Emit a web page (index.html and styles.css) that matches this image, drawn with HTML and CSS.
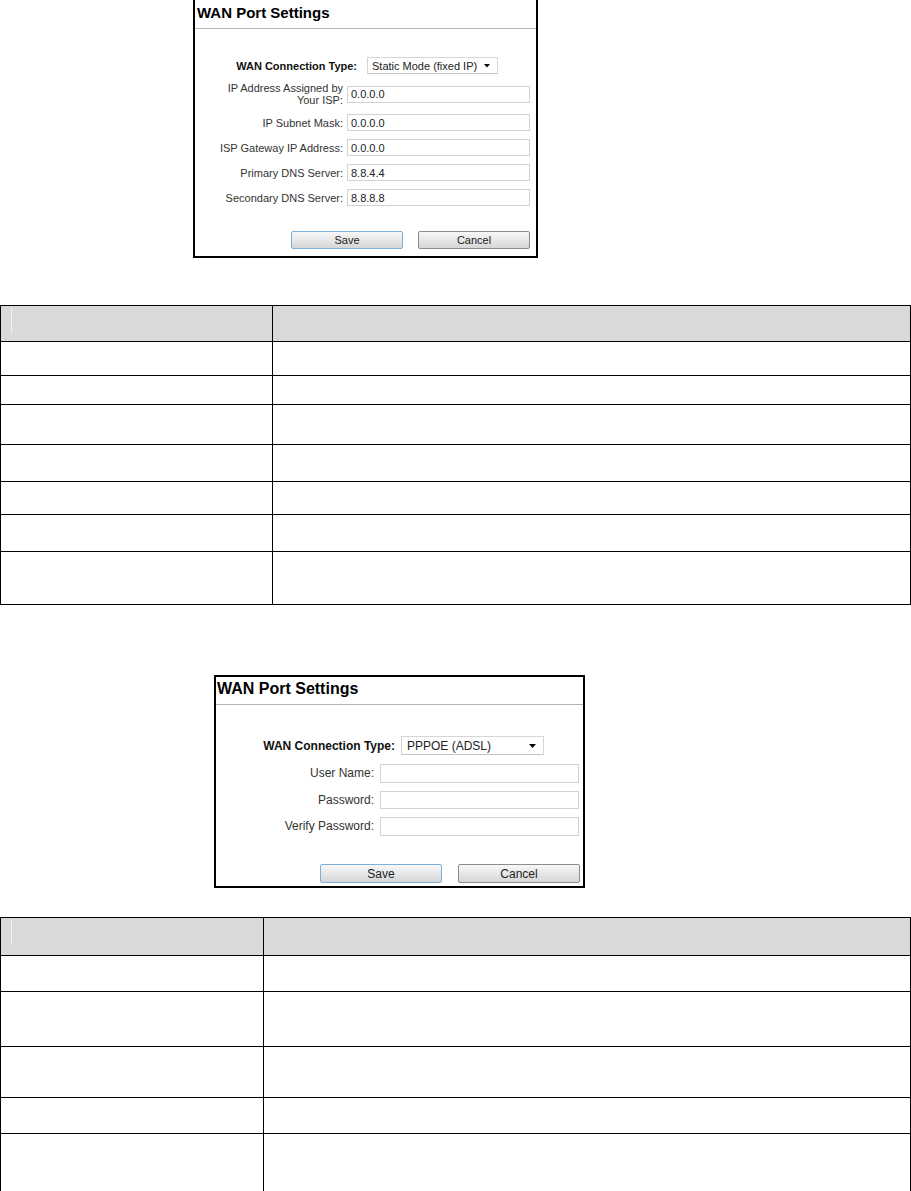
FILE: index.html
```html
<!DOCTYPE html>
<html lang="en">
<head>
    <meta charset="UTF-8">
    <meta name="viewport" content="width=device-width, initial-scale=1.0">
    <title>WAN Port Settings</title>
    <link rel="stylesheet" href="styles.css">
</head>
<body>

    <!-- Static IP -->
    <div class="dialog dialog-static">
        <div class="dlg-title">WAN Port Settings</div>
        <div class="dlg-form">
            <div class="row row-type">
                <label>WAN Connection Type:</label>
                <div class="select">
                    <span>Static Mode (fixed IP)</span>
                    <svg width="6" height="4" viewBox="0 0 6 4"><path d="M0 0H6L3 3.5Z" fill="#000"/></svg>
                </div>
            </div>
            <div class="row">
                <label>IP Address Assigned by<br>Your ISP:</label>
                <input type="text" value="0.0.0.0">
            </div>
            <div class="row">
                <label>IP Subnet Mask:</label>
                <input type="text" value="0.0.0.0">
            </div>
            <div class="row">
                <label>ISP Gateway IP Address:</label>
                <input type="text" value="0.0.0.0">
            </div>
            <div class="row">
                <label>Primary DNS Server:</label>
                <input type="text" value="8.8.4.4">
            </div>
            <div class="row">
                <label>Secondary DNS Server:</label>
                <input type="text" value="8.8.8.8">
            </div>
        </div>
        <div class="dlg-buttons">
            <button class="btn btn-save">Save</button>
            <button class="btn">Cancel</button>
        </div>
    </div>

    <table class="desc desc-static">
        <tr class="head h36"><td class="c1"><div class="hd-mark"></div></td><td></td></tr>
        <tr class="h34"><td></td><td></td></tr>
        <tr class="h29"><td></td><td></td></tr>
        <tr class="h40"><td></td><td></td></tr>
        <tr class="h37"><td></td><td></td></tr>
        <tr class="h33"><td></td><td></td></tr>
        <tr class="h37"><td></td><td></td></tr>
        <tr class="h53"><td></td><td></td></tr>
    </table>

    <!-- PPPoE -->
    <div class="dialog dialog-pppoe">
        <div class="dlg-title">WAN Port Settings</div>
        <div class="dlg-form">
            <div class="row row-type">
                <label>WAN Connection Type:</label>
                <div class="select">
                    <span>PPPOE (ADSL)</span>
                    <svg width="7" height="4" viewBox="0 0 7 4"><path d="M0 0H7L3.5 4Z" fill="#000"/></svg>
                </div>
            </div>
            <div class="row">
                <label>User Name:</label>
                <input type="text" value="">
            </div>
            <div class="row">
                <label>Password:</label>
                <input type="password" value="">
            </div>
            <div class="row">
                <label>Verify Password:</label>
                <input type="password" value="">
            </div>
        </div>
        <div class="dlg-buttons">
            <button class="btn btn-save">Save</button>
            <button class="btn">Cancel</button>
        </div>
    </div>

    <table class="desc desc-pppoe">
        <tr class="head h38"><td class="c1"><div class="hd-mark"></div></td><td></td></tr>
        <tr class="h36"><td></td><td></td></tr>
        <tr class="h55"><td></td><td></td></tr>
        <tr class="h51"><td></td><td></td></tr>
        <tr class="h36"><td></td><td></td></tr>
        <tr class="h60"><td></td><td></td></tr>
    </table>

</body>
</html>
```

FILE: styles.css
```css
body {
    margin: 0;
    background: #fff;
    font-family: "Liberation Sans", Arial, sans-serif;
    color: #000;
}

/* dialogs */
.dialog {
    box-sizing: border-box;
    border: 2px solid #000;
    background: #fff;
    color: #333;
}

.dlg-title {
    font-weight: bold;
    color: #000;
    border-bottom: 1px solid #b4b4b4;
}

.dlg-form {
    display: flex;
    flex-direction: column;
}

.row {
    display: flex;
    align-items: center;
}

.row label {
    text-align: right;
    flex-shrink: 0;
}

.row-type label {
    font-weight: bold;
    color: #111;
}

.row input {
    box-sizing: border-box;
    margin: 0;
    border: 1px solid #cfd3d8;
    padding: 0 3px;
    font-family: inherit;
    color: #222;
    background: #fff;
    outline: none;
}

.select {
    box-sizing: border-box;
    display: flex;
    align-items: center;
    justify-content: space-between;
    border: 1px solid #d6d6d6;
    border-bottom-color: #c4c4c4;
    background: #fff;
    color: #222;
}

.dlg-buttons {
    display: flex;
    justify-content: flex-end;
}

.btn {
    box-sizing: border-box;
    margin: 0;
    padding: 0;
    border: 1px solid #8c8c8c;
    border-radius: 2px;
    background: linear-gradient(#f7f7f7, #e4e4e4 60%, #d6d6d6);
    font-family: inherit;
    color: #222;
    cursor: pointer;
}

.btn-save {
    border-color: #7fb0dc;
}

/* static ip dialog */
.dialog-static {
    margin-left: 193px;
    width: 345px;
    height: 258px;
    border-top: none;
    font-size: 11px;
}

.dialog-static .dlg-title {
    font-size: 15px;
    line-height: 18px;
    padding: 4px 0 6px 2px;
}

.dialog-static .dlg-form {
    padding: 28px 6px 0 0;
    gap: 8px;
}

.dialog-static .row label {
    width: 148px;
    margin-right: 4px;
    line-height: 12px;
}

.dialog-static .row-type label {
    width: 162px;
    margin-right: 10px;
}

.dialog-static .row input {
    width: 183px;
    height: 17px;
    font-size: 11px;
}

.dialog-static .select {
    width: 131px;
    height: 17px;
    padding: 0 7px 0 4px;
}

.dialog-static .dlg-buttons {
    margin-top: 25px;
    padding-right: 6px;
    gap: 15px;
}

.dialog-static .btn {
    width: 112px;
    height: 18px;
    font-size: 11px;
}

/* pppoe dialog */
.dialog-pppoe {
    margin: 70px 0 0 214px;
    width: 371px;
    height: 213px;
    font-size: 12px;
}

.dialog-pppoe .dlg-title {
    font-size: 16px;
    line-height: 19px;
    padding: 2px 0 6px 1px;
}

.dialog-pppoe .dlg-form {
    padding: 31px 4px 0 0;
    gap: 8px;
}

.dialog-pppoe .row-type {
    margin-bottom: 1px;
}

.dialog-pppoe .row label {
    width: 158px;
    margin-right: 6px;
}

.dialog-pppoe .row-type label {
    width: 179px;
}

.dialog-pppoe .row input {
    width: 199px;
    height: 18.5px;
    font-size: 12px;
}

.dialog-pppoe .select {
    width: 143px;
    height: 19px;
    padding: 0 7px 0 5px;
    font-size: 12px;
}

.dialog-pppoe .dlg-buttons {
    margin-top: 28.5px;
    padding-right: 3px;
    gap: 16px;
}

.dialog-pppoe .btn {
    width: 122px;
    height: 19px;
    font-size: 12px;
}

/* description tables */
.desc {
    width: 911px;
    border-collapse: collapse;
    table-layout: fixed;
}

.desc td {
    border: 1px solid #000;
    padding: 0;
}

.desc .head td {
    background: #d9d9d9;
    vertical-align: top;
}

.hd-mark {
    margin: 2px 0 0 10px;
    height: 25px;
    border-left: 1px solid #f3f3f3;
}

.desc-static {
    margin-top: 47px;
}

.desc-static .c1 {
    width: 271px;
}

.desc-pppoe {
    margin-top: 29px;
}

.desc-pppoe .c1 {
    width: 262px;
}

.h29 { height: 29px; }
.h33 { height: 33px; }
.h34 { height: 34px; }
.h36 { height: 36px; }
.h37 { height: 37px; }
.h38 { height: 38px; }
.h40 { height: 40px; }
.h51 { height: 51px; }
.h53 { height: 53px; }
.h55 { height: 55px; }
.h60 { height: 60px; }
```
